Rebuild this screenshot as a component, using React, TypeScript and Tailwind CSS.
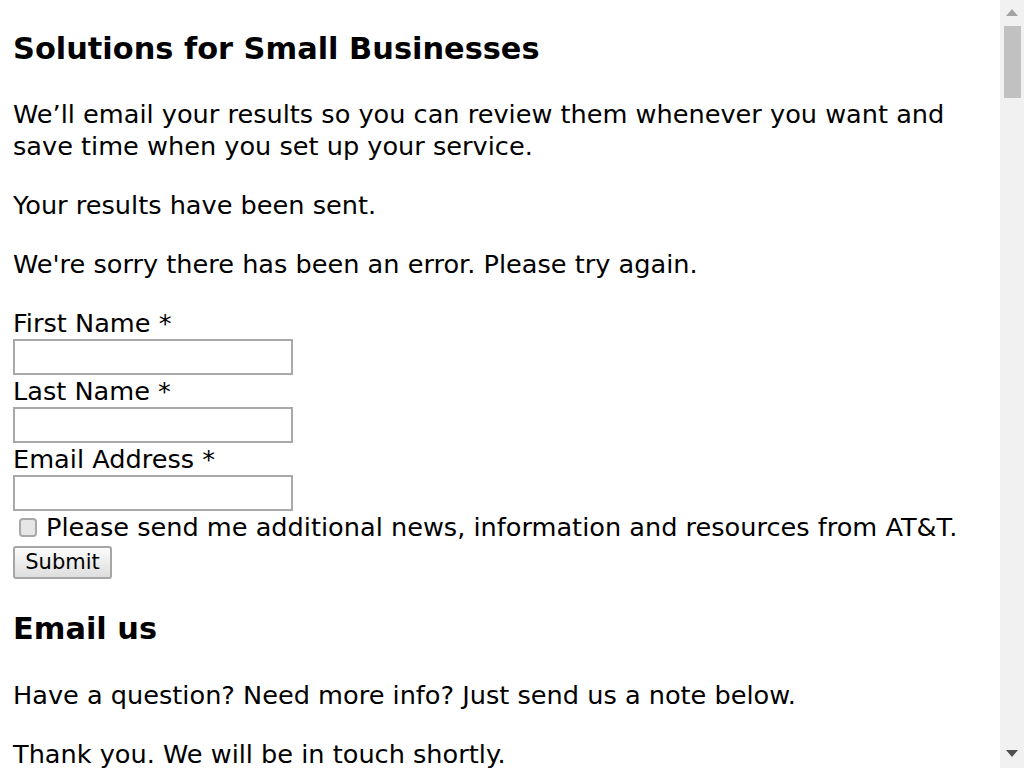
import React from 'react';

const font = "font-['DejaVu_Sans',sans-serif]";

function Field({ label }: { label: string }) {
  return (
    <>
      <label className="block h-[32px] leading-[32px]">{label}</label>
      <input
        type="text"
        className="block w-[280px] h-[36px] border-2 border-[#a9a9a9] bg-white outline-none"
      />
    </>
  );
}

function Scrollbar() {
  return (
    <div className="w-[24px] h-full bg-[#f1f1f1] flex flex-col items-center shrink-0">
      <svg width="12" height="8" viewBox="0 0 12 8" className="mt-[9px]">
        <polygon points="6,0 12,7 0,7" fill="#a3a3a3" />
      </svg>
      <div className="mt-[9px] w-[17px] h-[72px] bg-[#c1c1c1]" />
      <div className="flex-1" />
      <svg width="12" height="8" viewBox="0 0 12 8" className="mb-[10px]">
        <polygon points="0,0 12,0 6,7" fill="#505050" />
      </svg>
    </div>
  );
}

export default function App() {
  return (
    <div className={`flex h-screen w-full overflow-hidden bg-white text-black ${font}`}>
      <div className="flex-1 px-[13px] text-[25.6px] leading-[32px]">
        <h2 className="mt-[31px] text-[30.4px] leading-[36px] font-bold">
          Solutions for Small Businesses
        </h2>
        <p className="mt-[31px]">
          We’ll email your results so you can review them whenever you want and save time when you set up your service.
        </p>
        <p className="mt-[27px]">Your results have been sent.</p>
        <p className="mt-[27px]">We're sorry there has been an error. Please try again.</p>
        <form className="mt-[27px]" onSubmit={(e) => e.preventDefault()}>
          <Field label="First Name *" />
          <Field label="Last Name *" />
          <Field label="Email Address *" />
          <div className="flex items-center h-[32px]">
            <span className="ml-[6px] mr-[9px] w-[18px] h-[19px] rounded-[4px] border-2 border-[#a8a8a8] bg-[#e6e6e6]" />
            <span>Please send me additional news, information and resources from AT&amp;T.</span>
          </div>
          <button
            type="submit"
            className="mt-[3px] block w-[99px] h-[33px] rounded-[3px] border-2 border-[#a6a6a6] bg-gradient-to-b from-[#fbfbfb] to-[#dedede] text-[21px] leading-[29px]"
          >
            Submit
          </button>
        </form>
        <h2 className="mt-[32px] text-[30.4px] leading-[36px] font-bold">Email us</h2>
        <p className="mt-[32px]">Have a question? Need more info? Just send us a note below.</p>
        <p className="mt-[27px]">Thank you. We will be in touch shortly.</p>
      </div>
      <Scrollbar />
    </div>
  );
}
